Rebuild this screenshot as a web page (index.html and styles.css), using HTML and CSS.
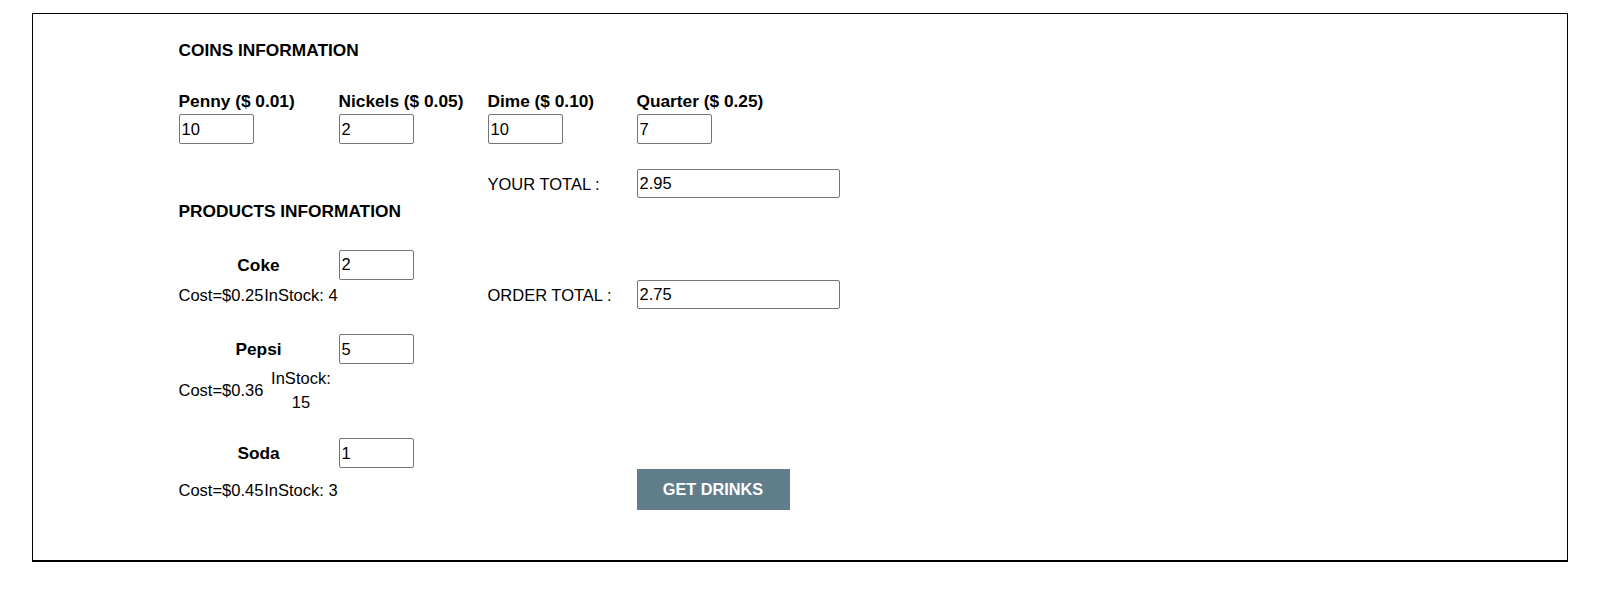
FILE: index.html
```html
<!DOCTYPE html>
<html lang="en">
<head>
<meta charset="utf-8">
<title>Vending Machine</title>
<link rel="stylesheet" href="styles.css">
</head>
<body>
<div class="panel">
  <div class="row r-head">
    <div class="head span-all">COINS INFORMATION</div>
  </div>
  <div class="row r-head gap-labels">
    <div class="label">Penny ($ 0.01)</div>
    <div class="label">Nickels ($ 0.05)</div>
    <div class="label">Dime ($ 0.10)</div>
    <div class="label">Quarter ($ 0.25)</div>
  </div>
  <div class="row r-input gap-xs">
    <div><input class="field coin" type="text" value="10"></div>
    <div><input class="field coin" type="text" value="2"></div>
    <div><input class="field coin" type="text" value="10"></div>
    <div><input class="field coin" type="text" value="7"></div>
  </div>
  <div class="row r-total gap-l">
    <div></div>
    <div></div>
    <div class="text">YOUR TOTAL :</div>
    <div><input class="field total" type="text" value="2.95"></div>
  </div>
  <div class="row r-head gap-s">
    <div class="head span-all">PRODUCTS INFORMATION</div>
  </div>

  <div class="row r-input gap-prod1">
    <div class="pname">Coke</div>
    <div><input class="field coin" type="text" value="2"></div>
  </div>
  <div class="row r-total gap-xxs">
    <div class="info"><span class="cost">Cost=$0.25</span><span class="stock">InStock: 4</span></div>
    <div></div>
    <div class="text">ORDER TOTAL :</div>
    <div><input class="field total" type="text" value="2.75"></div>
  </div>

  <div class="row r-input gap-l2">
    <div class="pname">Pepsi</div>
    <div><input class="field coin" type="text" value="5"></div>
  </div>
  <div class="row r-info gap-xs2">
    <div class="info"><span class="cost">Cost=$0.36</span><span class="stock">InStock: 15</span></div>
  </div>

  <div class="row r-input gap-l3">
    <div class="pname">Soda</div>
    <div><input class="field coin" type="text" value="1"></div>
  </div>
  <div class="row r-btn gap-xxs2">
    <div class="info"><span class="cost">Cost=$0.45</span><span class="stock">InStock: 3</span></div>
    <div></div>
    <div></div>
    <div><button class="btn" type="button">GET DRINKS</button></div>
  </div>
</div>
</body>
</html>
```

FILE: styles.css
```css
html, body {
  margin: 0;
  padding: 0;
  background: #ffffff;
}

body {
  font-family: "Liberation Sans", Arial, Helvetica, sans-serif;
  font-size: 16.5px;
  color: #000000;
}

.panel {
  box-sizing: border-box;
  width: 1536px;
  margin: 13px 0 0 32px;
  border: 1px solid #000000;
  border-bottom-width: 2px;
  padding: 25.5px 0 49.7px 145.5px;
}

.row {
  display: grid;
  grid-template-columns: 160px 149px 149px 204px;
  align-items: center;
}

.r-head { height: 20px; }
.r-input { height: 30px; }
.r-total { height: 29px; }
.r-info { height: 48px; }
.r-btn { height: 41px; }

.gap-labels { margin-top: 31px; }
.gap-xs { margin-top: 3.8px; }
.gap-l { margin-top: 25.2px; }
.gap-s { margin-top: 2.2px; }
.gap-prod1 { margin-top: 28.9px; }
.gap-xxs { margin-top: 0.9px; }
.gap-l2 { margin-top: 24.9px; }
.gap-xs2 { margin-top: 1.2px; }
.gap-l3 { margin-top: 24.7px; }
.gap-xxs2 { margin-top: 1px; }

.head {
  font-weight: bold;
  font-size: 17.3px;
  line-height: 20px;
  white-space: nowrap;
}

.span-all { grid-column: 1 / -1; }

.label {
  font-weight: bold;
  font-size: 17.3px;
  line-height: 20px;
  white-space: nowrap;
}

.text {
  font-size: 16.5px;
  line-height: 20px;
  white-space: nowrap;
}

.pname {
  font-weight: bold;
  font-size: 17.3px;
  line-height: 20px;
  text-align: center;
}

.info {
  display: flex;
  align-items: center;
  font-size: 16.5px;
  line-height: 24px;
}

.cost {
  flex: none;
  white-space: nowrap;
}

.stock {
  flex: 1 1 0;
  text-align: center;
}

.field {
  display: block;
  box-sizing: border-box;
  margin: 0;
  border: 1px solid #767676;
  border-radius: 2px;
  padding: 1px 2px;
  font-family: "Liberation Sans", Arial, Helvetica, sans-serif;
  font-size: 16.5px;
  color: #000000;
  background: #ffffff;
}

.coin {
  width: 75px;
  height: 30px;
}

.total {
  width: 203px;
  height: 29px;
}

.btn {
  display: block;
  box-sizing: border-box;
  width: 153px;
  height: 41px;
  margin: 0;
  padding: 0;
  border: none;
  background: #607d8b;
  color: #ffffff;
  font-family: "Liberation Sans", Arial, Helvetica, sans-serif;
  font-weight: bold;
  font-size: 16.3px;
  cursor: pointer;
}
```
